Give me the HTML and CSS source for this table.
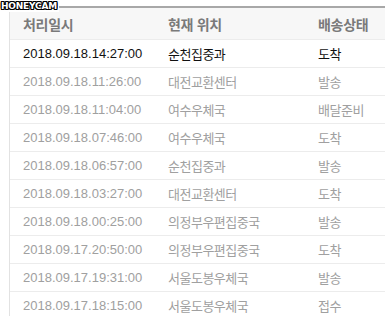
FILE: index.html
```html
<!DOCTYPE html>
<html lang="ko">
<head>
<meta charset="utf-8">
<link rel="stylesheet" href="styles.css">
</head>
<body>
<div class="watermark">HONEYCAM</div>
<div class="wrap">
  <div class="table">
    <div class="row head">
      <div>처리일시</div><div>현재 위치</div><div>배송상태</div>
    </div>
    <div class="row current">
      <div class="num">2018.09.18.14:27:00</div><div>순천집중과</div><div>도착</div>
    </div>
    <div class="row">
      <div class="num">2018.09.18.11:26:00</div><div>대전교환센터</div><div>발송</div>
    </div>
    <div class="row">
      <div class="num">2018.09.18.11:04:00</div><div>여수우체국</div><div>배달준비</div>
    </div>
    <div class="row">
      <div class="num">2018.09.18.07:46:00</div><div>여수우체국</div><div>도착</div>
    </div>
    <div class="row">
      <div class="num">2018.09.18.06:57:00</div><div>순천집중과</div><div>발송</div>
    </div>
    <div class="row">
      <div class="num">2018.09.18.03:27:00</div><div>대전교환센터</div><div>도착</div>
    </div>
    <div class="row">
      <div class="num">2018.09.18.00:25:00</div><div>의정부우편집중국</div><div>발송</div>
    </div>
    <div class="row">
      <div class="num">2018.09.17.20:50:00</div><div>의정부우편집중국</div><div>도착</div>
    </div>
    <div class="row">
      <div class="num">2018.09.17.19:31:00</div><div>서울도봉우체국</div><div>발송</div>
    </div>
    <div class="row">
      <div class="num">2018.09.17.18:15:00</div><div>서울도봉우체국</div><div>접수</div>
    </div>
  </div>
</div>
</body>
</html>
```
FILE: styles.css
```css
html, body {
  margin: 0;
  padding: 0;
  background: #fff;
  overflow: hidden;
}
body {
  width: 385px;
  height: 316px;
  position: relative;
  font-family: "Liberation Sans", "Noto Sans CJK KR", sans-serif;
}
.watermark {
  position: absolute;
  left: 0;
  top: 0;
  font-family: "DejaVu Sans", sans-serif;
  font-weight: bold;
  font-size: 9px;
  line-height: 12px;
  letter-spacing: -0.2px;
  color: #fff;
  background: #fff;
  padding: 0 2px 0 1px;
  text-shadow: 1px 0 0 #000, -1px 0 0 #000, 0 1px 0 #000, 0 -1px 0 #000,
    1px 1px 0 #000, -1px -1px 0 #000, 1px -1px 0 #000, -1px 1px 0 #000;
  z-index: 2;
}
.wrap {
  padding: 6px 0 0 9px;
}
.table {
  border-top: 2px solid #a8a8a8;
  border-left: 1px solid #e2e2e2;
}
.row {
  display: grid;
  grid-template-columns: 145px 150px 1fr;
  height: 27px;
  align-items: center;
  border-bottom: 1px solid #ececec;
  font-size: 13px;
  color: #a0a0a0;
}
.row > div {
  padding-left: 13px;
  white-space: nowrap;
  overflow: hidden;
  font-family: "Noto Sans CJK KR", sans-serif;
  letter-spacing: -0.5px;
}
.row > div.num {
  font-family: "Liberation Sans", sans-serif;
  letter-spacing: 0;
}
.row.head {
  height: 31px;
  background: #f7f7f7;
  color: #7a7a7a;
  font-weight: bold;
  font-size: 14px;
}
.row.head > div {
  letter-spacing: -0.3px;
}
.row.current {
  color: #111;
}
```
